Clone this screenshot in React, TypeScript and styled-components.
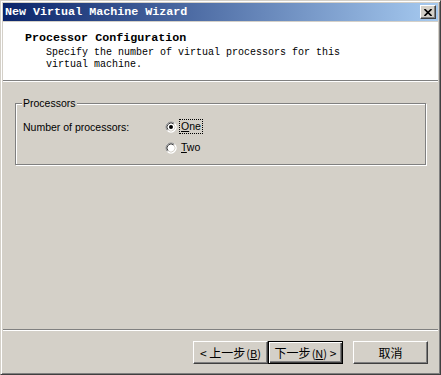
import * as React from 'react'
import styled, { createGlobalStyle, css } from 'styled-components'

const GlobalStyle = createGlobalStyle`
  html, body {
    margin: 0;
    padding: 0;
    background: #d4d0c8;
  }
`

const Window = styled.div`
  width: 441px;
  height: 375px;
  box-sizing: border-box;
  background: #d4d0c8;
  border: 1px solid;
  border-color: #d4d0c8 #404040 #404040 #d4d0c8;
  box-shadow: inset 1px 1px 0 #fff, inset -1px -1px 0 #808080;
  padding: 2px;
  display: flex;
  flex-direction: column;
`

const TitleBar = styled.div`
  height: 18px;
  flex: none;
  margin-bottom: 1px;
  background: linear-gradient(to right, #0a246a, #a6caf0);
  display: flex;
  align-items: center;
  justify-content: space-between;
  padding: 0 2px;
`

const TitleText = styled.span`
  font: bold 11.7px 'Liberation Mono', monospace;
  color: #fff;
  white-space: pre;
`

const CloseButton = styled.div`
  width: 16px;
  height: 14px;
  box-sizing: border-box;
  background: #d4d0c8;
  border: 1px solid;
  border-color: #fff #404040 #404040 #fff;
  box-shadow: inset -1px -1px 0 #808080;
  display: flex;
  align-items: center;
  justify-content: center;
`

const Header = styled.div`
  height: 58px;
  flex: none;
  background: #fff;
  box-sizing: border-box;
  padding: 9px 0 0 22px;
`

const HeaderTitle = styled.div`
  font: bold 11.7px/14px 'Liberation Mono', monospace;
  color: #000;
  white-space: pre;
`

const HeaderDesc = styled.div`
  font: 10px/12px 'Liberation Mono', monospace;
  color: #000;
  margin: 2px 0 0 21px;
  white-space: pre;
`

const Separator = styled.div`
  flex: none;
  height: 0;
  border-top: 1px solid #808080;
  border-bottom: 1px solid #fff;
`

const Content = styled.div`
  flex: 1;
  padding: 15px 12px 0 12px;
`

const GroupBox = styled.fieldset`
  margin: 0;
  padding: 6px 7px 6px 7px;
  border: 1px solid #808080;
  box-shadow: 1px 1px 0 #fff, inset 1px 1px 0 #fff;
  display: grid;
  grid-template-columns: 142px auto;
  align-items: start;
  font: 10.5px 'Liberation Sans', Arial, sans-serif;
  color: #000;
`

const GroupLegend = styled.legend`
  padding: 0 1px;
  margin-left: -1px;
  line-height: 13px;
  background: #d4d0c8;
  font: 10.5px/13px 'Liberation Sans', Arial, sans-serif;
`

const FieldLabel = styled.div`
  height: 21px;
  display: flex;
  align-items: center;
`

const RadioList = styled.div`
  display: flex;
  flex-direction: column;
`

const RadioItem = styled.label`
  height: 21px;
  display: flex;
  align-items: center;
  gap: 2px;
`

const RadioText = styled.span<{ $focused?: boolean }>`
  padding: 0 1px;
  line-height: 13px;
  border: 1px dotted transparent;
  ${(p) =>
    p.$focused &&
    css`
      border-color: #000;
    `}
`

const Footer = styled.div`
  flex: none;
  display: flex;
  justify-content: flex-end;
  padding: 10px 10px 8px 0;
`

const Button = styled.button<{ $default?: boolean; $gap?: boolean }>`
  width: 75px;
  height: 23px;
  box-sizing: border-box;
  padding: 0;
  margin-left: ${(p) => (p.$gap ? '10px' : '0')};
  background: #d4d0c8;
  color: #000;
  font: 12px 'Noto Sans CJK SC', sans-serif;
  border: 1px solid;
  border-color: #fff #404040 #404040 #fff;
  box-shadow: inset -1px -1px 0 #808080;
  display: flex;
  align-items: center;
  justify-content: center;
  white-space: pre;
  ${(p) =>
    p.$default &&
    css`
      border: 1px solid #000;
      box-shadow: inset 1px 1px 0 #fff, inset -1px -1px 0 #404040,
        inset -2px -2px 0 #808080;
    `}
`

const Mnemonic = styled.span`
  font-size: 11px;
  margin-left: 1px;
`

const Radio = ({ checked }: { checked?: boolean }) => (
  <svg width="12" height="12" viewBox="0 0 12 12">
    <circle cx="6" cy="6" r="5.5" fill="#fff" />
    <path d="M9.54 2.46 A5 5 0 0 0 2.46 9.54" stroke="#808080" fill="none" />
    <path d="M8.83 3.17 A4 4 0 0 0 3.17 8.83" stroke="#404040" fill="none" />
    <path d="M2.46 9.54 A5 5 0 0 0 9.54 2.46" stroke="#fff" fill="none" />
    <path d="M3.17 8.83 A4 4 0 0 0 8.83 3.17" stroke="#d4d0c8" fill="none" />
    {checked && <circle cx="6" cy="6" r="2" fill="#000" />}
  </svg>
)

const App = () => {
  return (
    <>
      <GlobalStyle />
      <Window>
        <TitleBar>
          <TitleText>New Virtual Machine Wizard</TitleText>
          <CloseButton>
            <svg width="8" height="7" viewBox="0 0 8 7">
              <path d="M0.5 0 L7.5 7 M7.5 0 L0.5 7" stroke="#000" strokeWidth="1.6" />
            </svg>
          </CloseButton>
        </TitleBar>
        <Header>
          <HeaderTitle>Processor Configuration</HeaderTitle>
          <HeaderDesc>
            {'Specify the number of virtual processors for this\nvirtual machine.'}
          </HeaderDesc>
        </Header>
        <Separator />
        <Content>
          <GroupBox>
            <GroupLegend>Processors</GroupLegend>
            <FieldLabel>Number of processors:</FieldLabel>
            <RadioList>
              <RadioItem>
                <Radio checked />
                <RadioText $focused>
                  <u>O</u>ne
                </RadioText>
              </RadioItem>
              <RadioItem>
                <Radio />
                <RadioText>
                  <u>T</u>wo
                </RadioText>
              </RadioItem>
            </RadioList>
          </GroupBox>
        </Content>
        <Separator />
        <Footer>
          <Button>
            {'< 上一步'}
            <Mnemonic>
              (<u>B</u>)
            </Mnemonic>
          </Button>
          <Button $default>
            {'下一步'}
            <Mnemonic>
              (<u>N</u>)
            </Mnemonic>
            {' >'}
          </Button>
          <Button $gap>取消</Button>
        </Footer>
      </Window>
    </>
  )
}

export default App
